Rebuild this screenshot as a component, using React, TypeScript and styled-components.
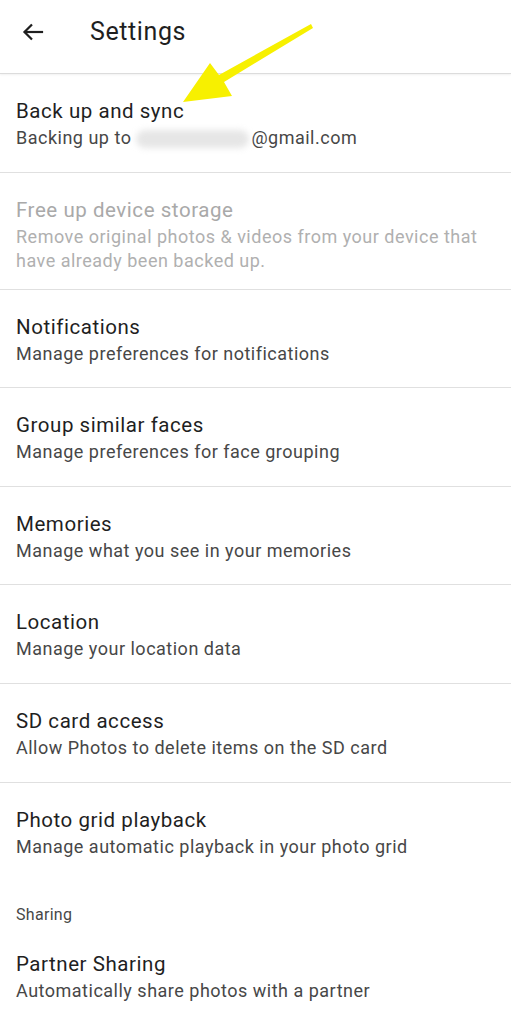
import React from "react";
import styled, { createGlobalStyle } from "styled-components";

const Global = createGlobalStyle`
  html, body { margin: 0; padding: 0; background: #fff; }
  body { font-family: Roboto, "Noto Sans", Arial, sans-serif; -webkit-font-smoothing: antialiased; }
`;

const Page = styled.div`
  position: relative;
  width: 511px;
  min-height: 1024px;
  background: #fff;
  overflow: hidden;
`;

const Header = styled.header`
  height: 74px;
  display: flex;
  align-items: center;
  padding: 0 0 10px 20px;
  box-sizing: border-box;
  border-bottom: 1px solid #dcdcdc;
  box-shadow: 0 1px 2px rgba(0, 0, 0, 0.06);
`;

const BackButton = styled.div`
  width: 26px;
  height: 26px;
  display: flex;
  align-items: center;
  justify-content: center;
  margin-right: 44px;
`;

const HeaderTitle = styled.h1`
  margin: 0;
  font-size: 25px;
  font-weight: 400;
  color: #1f1f1f;
  letter-spacing: 0.6px;
`;

const List = styled.div`
  display: flex;
  flex-direction: column;
`;

const Row = styled.div<{ $divider?: boolean }>`
  min-height: 98.6px;
  box-sizing: border-box;
  padding: 22px 16px 16px;
  border-bottom: ${(p) => (p.$divider ? "1px solid #e0e0e0" : "none")};
  display: flex;
  flex-direction: column;
`;

const Title = styled.div<{ $disabled?: boolean }>`
  font-size: 20.5px;
  line-height: 30px;
  letter-spacing: 0.55px;
  color: ${(p) => (p.$disabled ? "#a9a9a9" : "#1f1f1f")};
`;

const Subtitle = styled.div<{ $disabled?: boolean }>`
  font-size: 18px;
  line-height: 24px;
  letter-spacing: 0.5px;
  color: ${(p) => (p.$disabled ? "#b0b0b0" : "#474747")};
`;

const Blurred = styled.span`
  display: inline-block;
  vertical-align: middle;
  width: 113px;
  height: 18px;
  margin: 0 2px 0 0;
  background: #e6e6e6;
  border-radius: 9px;
  filter: blur(3px);
`;

const SectionLabel = styled.div`
  font-size: 16px;
  color: #474747;
  letter-spacing: 0.3px;
  padding: 24px 16px 2px;
  line-height: 20px;
`;

const ArrowOverlay = styled.svg`
  position: absolute;
  left: 0;
  top: 0;
  pointer-events: none;
`;

const items = [
  { title: "Free up device storage", sub: "Remove original photos & videos from your device that have already been backed up.", disabled: true },
  { title: "Notifications", sub: "Manage preferences for notifications" },
  { title: "Group similar faces", sub: "Manage preferences for face grouping" },
  { title: "Memories", sub: "Manage what you see in your memories" },
  { title: "Location", sub: "Manage your location data" },
  { title: "SD card access", sub: "Allow Photos to delete items on the SD card" },
];

export default function App() {
  return (
    <Page>
      <Global />
      <Header>
        <BackButton>
          <svg width="24" height="24" viewBox="0 0 24 24" fill="none" stroke="#1f1f1f" strokeWidth="2.2" strokeLinecap="square">
            <path d="M21 12H4" />
            <path d="M11 4.5L3.5 12L11 19.5" strokeLinecap="butt" />
          </svg>
        </BackButton>
        <HeaderTitle>Settings</HeaderTitle>
      </Header>
      <List>
        <Row $divider>
          <Title>Back up and sync</Title>
          <Subtitle>
            Backing up to <Blurred />@gmail.com
          </Subtitle>
        </Row>
        {items.map((it) => (
          <Row key={it.title} $divider>
            <Title $disabled={it.disabled}>{it.title}</Title>
            <Subtitle $disabled={it.disabled}>{it.sub}</Subtitle>
          </Row>
        ))}
        <Row>
          <Title>Photo grid playback</Title>
          <Subtitle>Manage automatic playback in your photo grid</Subtitle>
        </Row>
        <SectionLabel>Sharing</SectionLabel>
        <Row>
          <Title>Partner Sharing</Title>
          <Subtitle>Automatically share photos with a partner</Subtitle>
        </Row>
      </List>
      <ArrowOverlay width="511" height="130" viewBox="0 0 511 130">
        <polygon
          points="311,24 313,28 224,82 232,96 183,102 210,63 219,75"
          fill="#f7f000"
        />
      </ArrowOverlay>
    </Page>
  );
}
